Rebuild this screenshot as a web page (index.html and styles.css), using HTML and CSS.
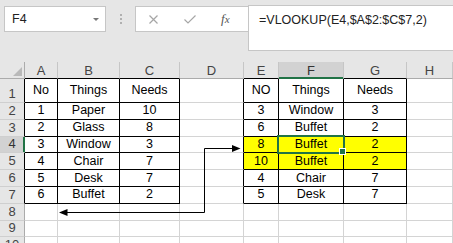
FILE: index.html
```html
<!DOCTYPE html>
<html lang="en">
<head>
  <meta charset="UTF-8">
  <title>VLOOKUP</title>
  <link rel="stylesheet" href="styles.css">
</head>
<body>

<div class="bar">
  <div class="namebox">
    <span>F4</span>
    <span class="drop"></span>
  </div>
  <div class="dots"><i></i><i></i><i></i></div>
  <div class="fxbox">
    <svg width="9" height="9" viewBox="0 0 9 9"><path d="M0.5 0.5 L8.5 8.5 M8.5 0.5 L0.5 8.5" stroke="#a6a6a6" stroke-width="1.2" fill="none"/></svg>
    <svg width="12" height="9" viewBox="0 0 12 9"><path d="M0.5 4.5 L4 8 L11.5 0.5" stroke="#a6a6a6" stroke-width="1.2" fill="none"/></svg>
    <span class="fx">f<span>x</span></span>
  </div>
  <div class="formula">=VLOOKUP(E4,$A$2:$C$7,2)</div>
</div>

<div class="sheet">
  <div class="row hdr">
    <div class="c corner"><span class="tri"></span></div>
    <div class="c ch bt">A</div>
    <div class="c ch bt">B</div>
    <div class="c ch bt">C</div>
    <div class="c ch">D</div>
    <div class="c ch bt">E</div>
    <div class="c ch bt on">F</div>
    <div class="c ch bt">G</div>
    <div class="c ch">H</div>
  </div>
  <div class="row r1">
    <div class="c rh tl">1</div>
    <div class="c t">No</div>
    <div class="c t">Things</div>
    <div class="c t">Needs</div>
    <div class="c tl"></div>
    <div class="c t">NO</div>
    <div class="c t">Things</div>
    <div class="c t">Needs</div>
    <div class="c"></div>
  </div>
  <div class="row">
    <div class="c rh tl">2</div>
    <div class="c t">1</div>
    <div class="c t">Paper</div>
    <div class="c t">10</div>
    <div class="c tl"></div>
    <div class="c t">3</div>
    <div class="c t">Window</div>
    <div class="c t">3</div>
    <div class="c"></div>
  </div>
  <div class="row">
    <div class="c rh tl">3</div>
    <div class="c t">2</div>
    <div class="c t">Glass</div>
    <div class="c t">8</div>
    <div class="c tl"></div>
    <div class="c t">6</div>
    <div class="c t">Buffet</div>
    <div class="c t">2</div>
    <div class="c"></div>
  </div>
  <div class="row">
    <div class="c rh tl on">4</div>
    <div class="c t">3</div>
    <div class="c t">Window</div>
    <div class="c t">3</div>
    <div class="c tl"></div>
    <div class="c t y">8</div>
    <div class="c t y sel">Buffet</div>
    <div class="c t y">2</div>
    <div class="c"></div>
  </div>
  <div class="row">
    <div class="c rh tl">5</div>
    <div class="c t">4</div>
    <div class="c t">Chair</div>
    <div class="c t">7</div>
    <div class="c tl"></div>
    <div class="c t y">10</div>
    <div class="c t y">Buffet</div>
    <div class="c t y">2</div>
    <div class="c"></div>
  </div>
  <div class="row">
    <div class="c rh tl">6</div>
    <div class="c t">5</div>
    <div class="c t">Desk</div>
    <div class="c t">7</div>
    <div class="c tl"></div>
    <div class="c t">4</div>
    <div class="c t">Chair</div>
    <div class="c t">7</div>
    <div class="c"></div>
  </div>
  <div class="row">
    <div class="c rh tl">7</div>
    <div class="c t">6</div>
    <div class="c t">Buffet</div>
    <div class="c t">2</div>
    <div class="c tl"></div>
    <div class="c t">5</div>
    <div class="c t">Desk</div>
    <div class="c t">7</div>
    <div class="c"></div>
  </div>
  <div class="row">
    <div class="c rh">8</div>
    <div class="c"></div><div class="c"></div><div class="c"></div><div class="c"></div>
    <div class="c"></div><div class="c"></div><div class="c"></div><div class="c"></div>
  </div>
  <div class="row">
    <div class="c rh">9</div>
    <div class="c"></div><div class="c"></div><div class="c"></div><div class="c"></div>
    <div class="c"></div><div class="c"></div><div class="c"></div><div class="c"></div>
  </div>
  <div class="row">
    <div class="c rh">10</div>
    <div class="c"></div><div class="c"></div><div class="c"></div><div class="c"></div>
    <div class="c"></div><div class="c"></div><div class="c"></div><div class="c"></div>
  </div>

  <!-- connector arrows drawn over the grid -->
  <svg class="arrows" width="453" height="181" viewBox="0 62 453 181">
    <path d="M204.5 148.5 H233 M204.5 148.5 V212.5 H66" stroke="#000" stroke-width="1" fill="none"/>
    <path d="M240.5 148.5 L232 145 L232 152 Z" fill="#000"/>
    <path d="M59 212.5 L67.5 209 L67.5 216 Z" fill="#000"/>
  </svg>
</div>

</body>
</html>
```

FILE: styles.css
```css
html, body {
  margin: 0;
  width: 453px;
  height: 243px;
  overflow: hidden;
  background: #e6e6e6;
}

body {
  font-family: 'Liberation Sans', Arial, sans-serif;
  color: #000;
}

/* formula bar */

.bar {
  height: 62px;
  box-sizing: border-box;
  padding-top: 5px;
  display: flex;
  align-items: flex-start;
}

.namebox {
  margin: 1px 0 0 4px;
  width: 102px;
  height: 26px;
  box-sizing: border-box;
  background: #fff;
  border: 1px solid #c6c6c6;
  display: flex;
  align-items: center;
  padding: 0 6px 0 7px;
  font-size: 12.5px;
  line-height: 24px;
  color: #222;
}

.drop {
  margin-left: auto;
  width: 0;
  height: 0;
  border-left: 3px solid transparent;
  border-right: 3px solid transparent;
  border-top: 3px solid #777;
}

.dots {
  margin: 9px 0 0 14px;
  display: flex;
  flex-direction: column;
  gap: 2px;
}

.dots i {
  display: block;
  width: 2px;
  height: 2px;
  background: #b0b0b0;
}

.fxbox {
  margin: 1px 0 0 13px;
  width: 113px;
  height: 26px;
  box-sizing: border-box;
  background: #fff;
  border: 1px solid #c6c6c6;
  border-right: none;
  display: flex;
  align-items: center;
  padding-left: 13px;
  gap: 26px;
}

.fx {
  margin-left: -1px;
  font-family: 'Liberation Serif', serif;
  font-style: italic;
  font-size: 13px;
  color: #555;
}

.fx span {
  font-size: 11px;
}

.formula {
  flex: 1;
  margin-right: -2px;
  height: 46px;
  box-sizing: border-box;
  background: #fff;
  border: 1px solid #c6c6c6;
  padding: 6px 0 0 10px;
  font-size: 12.5px;
  line-height: 16px;
  color: #222;
}

/* grid */

.sheet {
  position: relative;
  background: #fff;
}

.row {
  display: grid;
  grid-template-columns: 25px 33px 62px 60px 64px 35px 65px 63px 1fr;
  height: 16.8px;
}

.row.hdr {
  height: 17px;
}

.row.r1 {
  height: 24px;
}

.c {
  box-sizing: border-box;
  border-right: 1px solid #d4d4d4;
  border-bottom: 1px solid #d4d4d4;
  display: flex;
  align-items: center;
  justify-content: center;
  font-size: 12.5px;
  padding-bottom: 1px;
  white-space: nowrap;
}

.ch,
.corner {
  background: #e6e6e6;
  border-right-color: #c6c6c6;
  border-bottom-color: #ababab;
  font-size: 13px;
  color: #444;
  padding-bottom: 0;
}

.corner {
  align-items: flex-end;
  justify-content: flex-end;
  padding: 0 2px 2px 0;
  border-right-color: #ababab;
}

.tri {
  width: 0;
  height: 0;
  border-left: 9px solid transparent;
  border-bottom: 9px solid #b9b9b9;
}

.rh {
  background: #e6e6e6;
  border-right-color: #ababab;
  border-bottom-color: #cfcfcf;
  align-items: flex-end;
  padding-bottom: 1px;
  font-size: 13px;
  line-height: 14px;
  color: #444;
}

.t {
  border-right-color: #000;
  border-bottom-color: #000;
}

.tl {
  border-right-color: #000;
}

.bt {
  border-bottom-color: #000;
}

.y {
  background: #ffff00;
}

.ch.on {
  background: #d2d2d2;
  border-bottom-color: #217346;
  box-shadow: inset 0 -1px 0 #217346;
  color: #333;
}

.rh.on {
  background: #d2d2d2;
  border-right-color: #217346;
  box-shadow: inset -1px 0 0 #217346;
  color: #333;
}

.sel {
  position: relative;
}

.sel::before {
  content: "";
  position: absolute;
  left: -2px;
  top: -2px;
  right: -2px;
  bottom: -2px;
  border: 2px solid #217346;
}

.sel::after {
  content: "";
  position: absolute;
  right: -3px;
  bottom: -3px;
  width: 5px;
  height: 5px;
  background: #217346;
  border: 1px solid #fff;
}

.arrows {
  position: absolute;
  left: 0;
  top: 0;
}
```
